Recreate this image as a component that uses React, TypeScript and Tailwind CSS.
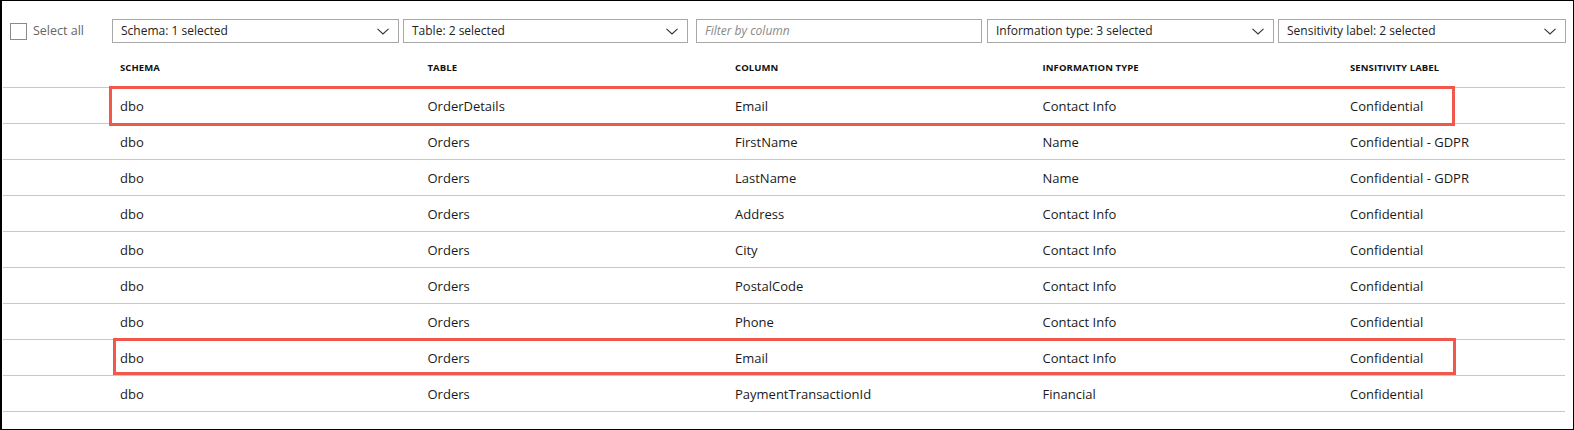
import React from "react";

const rows = [
  ["dbo", "OrderDetails", "Email", "Contact Info", "Confidential"],
  ["dbo", "Orders", "FirstName", "Name", "Confidential - GDPR"],
  ["dbo", "Orders", "LastName", "Name", "Confidential - GDPR"],
  ["dbo", "Orders", "Address", "Contact Info", "Confidential"],
  ["dbo", "Orders", "City", "Contact Info", "Confidential"],
  ["dbo", "Orders", "PostalCode", "Contact Info", "Confidential"],
  ["dbo", "Orders", "Phone", "Contact Info", "Confidential"],
  ["dbo", "Orders", "Email", "Contact Info", "Confidential"],
  ["dbo", "Orders", "PaymentTransactionId", "Financial", "Confidential"],
];

const headers = ["Schema", "Table", "Column", "Information type", "Sensitivity label"];

const Chevron = () => (
  <svg width="12" height="7" viewBox="0 0 12 7" fill="none" className="shrink-0">
    <path d="M0.5 0.8 L6 6 L11.5 0.8" stroke="#333" strokeWidth="1.1" />
  </svg>
);

const Dropdown = ({ label, className }: { label: string; className: string }) => (
  <div
    className={`h-[24px] border border-[#a8a8a8] flex items-center justify-between pl-[8px] pr-[9px] text-[12px] text-[#222] ${className}`}
  >
    <span>{label}</span>
    <Chevron />
  </div>
);

const App = () => {
  return (
    <div
      className="w-[1574px] h-[430px] border border-black border-l-2 bg-white relative overflow-hidden"
      style={{ fontFamily: '"Open Sans", "Noto Sans", sans-serif' }}
    >
      {/* filters */}
      <div className="flex items-center pt-[18px] pr-[7px]">
        <div className="flex items-center w-[110px] pl-[8px]">
          <div className="w-[17px] h-[17px] border border-[#8a8a8a] bg-white" />
          <span className="ml-[6px] text-[12.5px] text-[#666]">Select all</span>
        </div>
        <Dropdown label="Schema: 1 selected" className="w-[287px]" />
        <Dropdown label="Table: 2 selected" className="ml-[4px] w-[285px]" />
        <div className="ml-[8px] w-[286px] h-[24px] border border-[#a8a8a8] flex items-center pl-[8px] text-[12px] italic text-[#888]">
          Filter by column
        </div>
        <Dropdown label="Information type: 3 selected" className="ml-[5px] w-[287px]" />
        <Dropdown label="Sensitivity label: 2 selected" className="ml-[4px] flex-1" />
      </div>

      {/* table */}
      <div className="ml-[1px] w-[1562px]">
        <div className="h-[45px] flex items-center pt-[6px] pl-[117px] border-b border-[#c8c8c8]">
          {headers.map((h) => (
            <div key={h} className="w-[307.5px] shrink-0 text-[9.5px] font-bold uppercase tracking-[0.1px] text-[#111]">
              {h}
            </div>
          ))}
        </div>
        {rows.map((r, i) => (
          <div
            key={i}
            className="relative h-[36px] flex items-center pt-[2px] pl-[117px] border-b border-[#c8c8c8] text-[13px] text-[#1a1a1a]"
          >
            {r.map((c, j) => (
              <div key={j} className="w-[307.5px] shrink-0">
                {c}
              </div>
            ))}
            {i === 0 && (
              <div className="absolute left-[106px] top-[-2px] w-[1346px] h-[40px] border-[3px] border-[#f2574c]" />
            )}
            {i === 7 && (
              <div className="absolute left-[110px] top-[-2px] w-[1343px] h-[37px] border-[3px] border-[#f2574c]" />
            )}
          </div>
        ))}
      </div>
    </div>
  );
};

export default App;
